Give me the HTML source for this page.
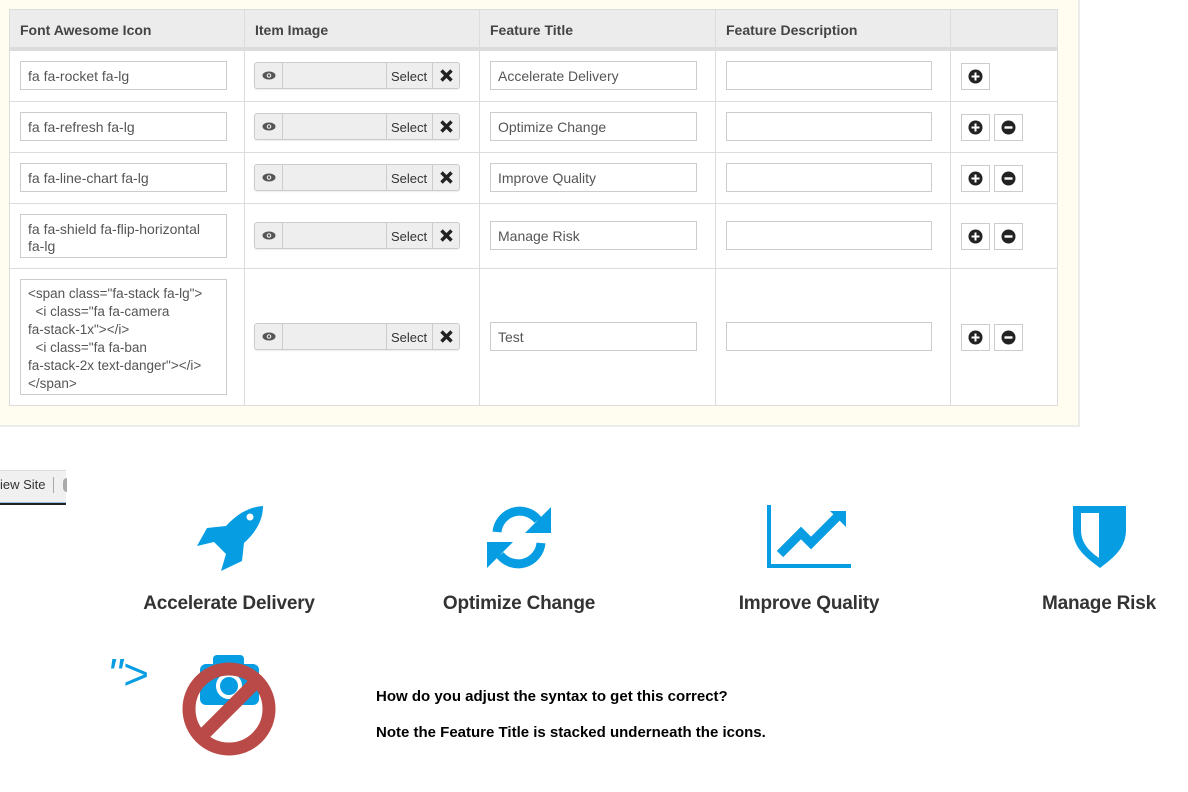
<!DOCTYPE html>
<html><head><meta charset="utf-8"><style>
*{box-sizing:border-box;margin:0;padding:0}
body{width:1188px;height:792px;position:relative;background:#fff;font-family:"Liberation Sans",Arial,sans-serif;overflow:hidden}
.a{position:absolute}
#yel{left:0;top:0;width:1080px;height:427px;background:#fffdef;border-right:2px solid #ececec;border-bottom:2px solid #ececec}
.th{position:absolute;top:9px;height:41px;background:#ececec;border:1px solid #dcdcdc;border-bottom:3px solid #dcdcdc;font-weight:bold;font-size:14px;color:#444;padding:12px 0 0 10px}
.td{position:absolute;background:#fff;border:1px solid #dcdcdc}
.in{position:absolute;background:#fff;border:1px solid #ccc;font-size:14px;color:#555;padding:6px 7px;line-height:17px;height:29px}
.grp{position:absolute;left:254px;width:206px;height:27px;border:1px solid #ccc;border-radius:3px;background:#eee;box-shadow:0 1px 1px rgba(0,0,0,.08)}
.grp .e{position:absolute;left:0;top:0;width:28px;height:25px;border-right:1px solid #ccc}
.grp .s{position:absolute;left:131px;top:0;width:47px;height:25px;border-left:1px solid #ccc;border-right:1px solid #ccc;font-size:13px;color:#333;padding:6px 0 0 4px}
.grp .x{position:absolute;left:178px;top:0;width:27px;height:25px}
.grp .x svg{position:absolute;left:7px;top:6px}
.btn{position:absolute;width:29px;height:27px;border:1px solid #ccc;background:#fff}
.btn svg{position:absolute;left:6px;top:5px}
.t{position:absolute;font-weight:bold;font-size:19px;color:#333;text-align:center;width:240px;letter-spacing:-0.2px}
</style></head><body>
<div id="yel" class="a"></div>
<div class="th" style="left:9px;width:236px">Font Awesome Icon</div>
<div class="th" style="left:244px;width:236px">Item Image</div>
<div class="th" style="left:479px;width:237px">Feature Title</div>
<div class="th" style="left:715px;width:236px">Feature Description</div>
<div class="th" style="left:950px;width:108px"></div>

<div class="td" style="left:9px;top:50px;width:236px;height:52px"></div><div class="td" style="left:244px;top:50px;width:236px;height:52px"></div><div class="td" style="left:479px;top:50px;width:237px;height:52px"></div><div class="td" style="left:715px;top:50px;width:236px;height:52px"></div><div class="td" style="left:950px;top:50px;width:108px;height:52px"></div>
<div class="td" style="left:9px;top:101px;width:236px;height:52px"></div><div class="td" style="left:244px;top:101px;width:236px;height:52px"></div><div class="td" style="left:479px;top:101px;width:237px;height:52px"></div><div class="td" style="left:715px;top:101px;width:236px;height:52px"></div><div class="td" style="left:950px;top:101px;width:108px;height:52px"></div>
<div class="td" style="left:9px;top:152px;width:236px;height:52px"></div><div class="td" style="left:244px;top:152px;width:236px;height:52px"></div><div class="td" style="left:479px;top:152px;width:237px;height:52px"></div><div class="td" style="left:715px;top:152px;width:236px;height:52px"></div><div class="td" style="left:950px;top:152px;width:108px;height:52px"></div>
<div class="td" style="left:9px;top:203px;width:236px;height:66px"></div><div class="td" style="left:244px;top:203px;width:236px;height:66px"></div><div class="td" style="left:479px;top:203px;width:237px;height:66px"></div><div class="td" style="left:715px;top:203px;width:236px;height:66px"></div><div class="td" style="left:950px;top:203px;width:108px;height:66px"></div>
<div class="td" style="left:9px;top:268px;width:236px;height:138px"></div><div class="td" style="left:244px;top:268px;width:236px;height:138px"></div><div class="td" style="left:479px;top:268px;width:237px;height:138px"></div><div class="td" style="left:715px;top:268px;width:236px;height:138px"></div><div class="td" style="left:950px;top:268px;width:108px;height:138px"></div>

<div class="in" style="left:20px;top:61px;width:207px">fa fa-rocket fa-lg</div>
<div class="in" style="left:20px;top:112px;width:207px">fa fa-refresh fa-lg</div>
<div class="in" style="left:20px;top:163px;width:207px">fa fa-line-chart fa-lg</div>
<div class="in" style="left:20px;top:214px;width:207px;height:44px;padding-top:6px">fa fa-shield fa-flip-horizontal fa-lg</div>
<div class="in" style="left:20px;top:279px;width:207px;height:116px;font-size:13.5px;line-height:18px;padding-top:5px;white-space:pre">&lt;span class="fa-stack fa-lg"&gt;
  &lt;i class="fa fa-camera
fa-stack-1x"&gt;&lt;/i&gt;
  &lt;i class="fa fa-ban
fa-stack-2x text-danger"&gt;&lt;/i&gt;
&lt;/span&gt;</div>

<div class="grp" style="top:62px"><div class="e"><svg class="a" style="left:7px;top:8px" width="14" height="9" viewBox="0 0 14 9"><ellipse cx="7" cy="4.5" rx="6.5" ry="4" fill="#555"/><circle cx="7" cy="4.5" r="2.3" fill="#eee"/><circle cx="7" cy="4.5" r="1.2" fill="#555"/></svg></div><div class="s">Select</div><div class="x"><svg width="13" height="13" viewBox="0 0 13 13"><path d="M1.5 1.5L11.5 11.5M11.5 1.5L1.5 11.5" stroke="#222" stroke-width="3.4"/></svg></div></div>
<div class="grp" style="top:113px"><div class="e"><svg class="a" style="left:7px;top:8px" width="14" height="9" viewBox="0 0 14 9"><ellipse cx="7" cy="4.5" rx="6.5" ry="4" fill="#555"/><circle cx="7" cy="4.5" r="2.3" fill="#eee"/><circle cx="7" cy="4.5" r="1.2" fill="#555"/></svg></div><div class="s">Select</div><div class="x"><svg width="13" height="13" viewBox="0 0 13 13"><path d="M1.5 1.5L11.5 11.5M11.5 1.5L1.5 11.5" stroke="#222" stroke-width="3.4"/></svg></div></div>
<div class="grp" style="top:164px"><div class="e"><svg class="a" style="left:7px;top:8px" width="14" height="9" viewBox="0 0 14 9"><ellipse cx="7" cy="4.5" rx="6.5" ry="4" fill="#555"/><circle cx="7" cy="4.5" r="2.3" fill="#eee"/><circle cx="7" cy="4.5" r="1.2" fill="#555"/></svg></div><div class="s">Select</div><div class="x"><svg width="13" height="13" viewBox="0 0 13 13"><path d="M1.5 1.5L11.5 11.5M11.5 1.5L1.5 11.5" stroke="#222" stroke-width="3.4"/></svg></div></div>
<div class="grp" style="top:222px"><div class="e"><svg class="a" style="left:7px;top:8px" width="14" height="9" viewBox="0 0 14 9"><ellipse cx="7" cy="4.5" rx="6.5" ry="4" fill="#555"/><circle cx="7" cy="4.5" r="2.3" fill="#eee"/><circle cx="7" cy="4.5" r="1.2" fill="#555"/></svg></div><div class="s">Select</div><div class="x"><svg width="13" height="13" viewBox="0 0 13 13"><path d="M1.5 1.5L11.5 11.5M11.5 1.5L1.5 11.5" stroke="#222" stroke-width="3.4"/></svg></div></div>
<div class="grp" style="top:323px"><div class="e"><svg class="a" style="left:7px;top:8px" width="14" height="9" viewBox="0 0 14 9"><ellipse cx="7" cy="4.5" rx="6.5" ry="4" fill="#555"/><circle cx="7" cy="4.5" r="2.3" fill="#eee"/><circle cx="7" cy="4.5" r="1.2" fill="#555"/></svg></div><div class="s">Select</div><div class="x"><svg width="13" height="13" viewBox="0 0 13 13"><path d="M1.5 1.5L11.5 11.5M11.5 1.5L1.5 11.5" stroke="#222" stroke-width="3.4"/></svg></div></div>

<div class="in" style="left:490px;top:61px;width:207px">Accelerate Delivery</div>
<div class="in" style="left:490px;top:112px;width:207px">Optimize Change</div>
<div class="in" style="left:490px;top:163px;width:207px">Improve Quality</div>
<div class="in" style="left:490px;top:221px;width:207px">Manage Risk</div>
<div class="in" style="left:490px;top:322px;width:207px">Test</div>
<div class="in" style="left:726px;top:61px;width:206px"></div>
<div class="in" style="left:726px;top:112px;width:206px"></div>
<div class="in" style="left:726px;top:163px;width:206px"></div>
<div class="in" style="left:726px;top:221px;width:206px"></div>
<div class="in" style="left:726px;top:322px;width:206px"></div>

<div class="btn" style="left:961px;top:63px"><svg width="15" height="15" viewBox="0 0 15 15"><circle cx="7.5" cy="7.5" r="7" fill="#222"/><path d="M7.5 3.5v8M3.5 7.5h8" stroke="#fff" stroke-width="2"/></svg></div>
<div class="btn" style="left:961px;top:114px"><svg width="15" height="15" viewBox="0 0 15 15"><circle cx="7.5" cy="7.5" r="7" fill="#222"/><path d="M7.5 3.5v8M3.5 7.5h8" stroke="#fff" stroke-width="2"/></svg></div>
<div class="btn" style="left:994px;top:114px"><svg width="15" height="15" viewBox="0 0 15 15"><circle cx="7.5" cy="7.5" r="7" fill="#222"/><path d="M3.5 7.5h8" stroke="#fff" stroke-width="2.4"/></svg></div>
<div class="btn" style="left:961px;top:165px"><svg width="15" height="15" viewBox="0 0 15 15"><circle cx="7.5" cy="7.5" r="7" fill="#222"/><path d="M7.5 3.5v8M3.5 7.5h8" stroke="#fff" stroke-width="2"/></svg></div>
<div class="btn" style="left:994px;top:165px"><svg width="15" height="15" viewBox="0 0 15 15"><circle cx="7.5" cy="7.5" r="7" fill="#222"/><path d="M3.5 7.5h8" stroke="#fff" stroke-width="2.4"/></svg></div>
<div class="btn" style="left:961px;top:223px"><svg width="15" height="15" viewBox="0 0 15 15"><circle cx="7.5" cy="7.5" r="7" fill="#222"/><path d="M7.5 3.5v8M3.5 7.5h8" stroke="#fff" stroke-width="2"/></svg></div>
<div class="btn" style="left:994px;top:223px"><svg width="15" height="15" viewBox="0 0 15 15"><circle cx="7.5" cy="7.5" r="7" fill="#222"/><path d="M3.5 7.5h8" stroke="#fff" stroke-width="2.4"/></svg></div>
<div class="btn" style="left:961px;top:324px"><svg width="15" height="15" viewBox="0 0 15 15"><circle cx="7.5" cy="7.5" r="7" fill="#222"/><path d="M7.5 3.5v8M3.5 7.5h8" stroke="#fff" stroke-width="2"/></svg></div>
<div class="btn" style="left:994px;top:324px"><svg width="15" height="15" viewBox="0 0 15 15"><circle cx="7.5" cy="7.5" r="7" fill="#222"/><path d="M3.5 7.5h8" stroke="#fff" stroke-width="2.4"/></svg></div>

<div class="a" style="left:0;top:470px;width:66px;height:35px;background:#f0f0f0;border-top:1px solid #ddd;border-bottom:3px solid #9bbde6"></div>
<div class="a" style="left:0;top:503px;width:66px;height:2px;background:#222"></div>
<div class="a" style="left:0;top:477px;font-size:13px;color:#333;white-space:nowrap">iew Site</div>
<div class="a" style="left:53px;top:477px;width:1px;height:16px;background:#aaa"></div>
<div class="a" style="left:63px;top:478px;width:4px;height:14px;border-radius:4px 0 0 4px;background:#aaa"></div>

<svg class="a" style="left:0;top:0" width="1188" height="792" viewBox="0 0 1188 792">
 <g fill="#069de3">
  <path d="M263,506 C263,520 256,532 244,543 L242,561 L221,571 L226,554 L214,542 L197,546 L207,528 L226,526 C237,514 249,507 263,506 Z"/>
  <circle cx="250" cy="517" r="3.5" fill="#fff"/>
 </g>
 <g stroke="#069de3" stroke-width="9" fill="none">
  <path d="M497,532 A23,23 0 0 1 538,520"/>
  <path d="M541,543 A23,23 0 0 1 500,555"/>
 </g>
 <g fill="#069de3">
  <polygon points="551,507 551,533 525,533"/>
  <polygon points="487,568 487,542 513,542"/>
  <rect x="767" y="505" width="4" height="63"/>
  <rect x="767" y="564" width="84" height="4"/>
  <polygon points="830,511 846,511 846,527"/>
  <path d="M1073,506 H1126 V530 C1126,550 1110,560 1100,568 C1090,560 1073,550 1073,530 Z"/>
  <path d="M1081,513 H1099 V558 C1092,553 1081,545 1081,530 Z" fill="#fff"/>
  <rect x="213" y="655" width="31" height="14" rx="4"/>
  <rect x="200" y="664" width="59" height="41" rx="6"/>
 </g>
 <polyline points="780,554 801,533 811,543 838,516" stroke="#069de3" stroke-width="9" fill="none"/>
 <circle cx="229" cy="686" r="11" fill="none" stroke="#fff" stroke-width="4"/>
 <circle cx="229" cy="709" r="40" fill="none" stroke="#b94a48" stroke-width="13"/>
 <line x1="204" y1="734" x2="254" y2="684" stroke="#b94a48" stroke-width="13"/>
</svg>
<div class="a" style="left:107px;top:650px;font-size:44px;color:#069de3;font-style:italic">"&gt;</div>

<div class="t" style="left:109px;top:593px">Accelerate Delivery</div>
<div class="t" style="left:399px;top:593px">Optimize Change</div>
<div class="t" style="left:689px;top:593px">Improve Quality</div>
<div class="t" style="left:979px;top:593px">Manage Risk</div>

<div class="a" style="left:376px;top:688px;font-size:15px;font-weight:bold;color:#000">How do you adjust the syntax to get this correct?</div>
<div class="a" style="left:376px;top:724px;font-size:15px;font-weight:bold;color:#000">Note the Feature Title is stacked underneath the icons.</div>
</body></html>
